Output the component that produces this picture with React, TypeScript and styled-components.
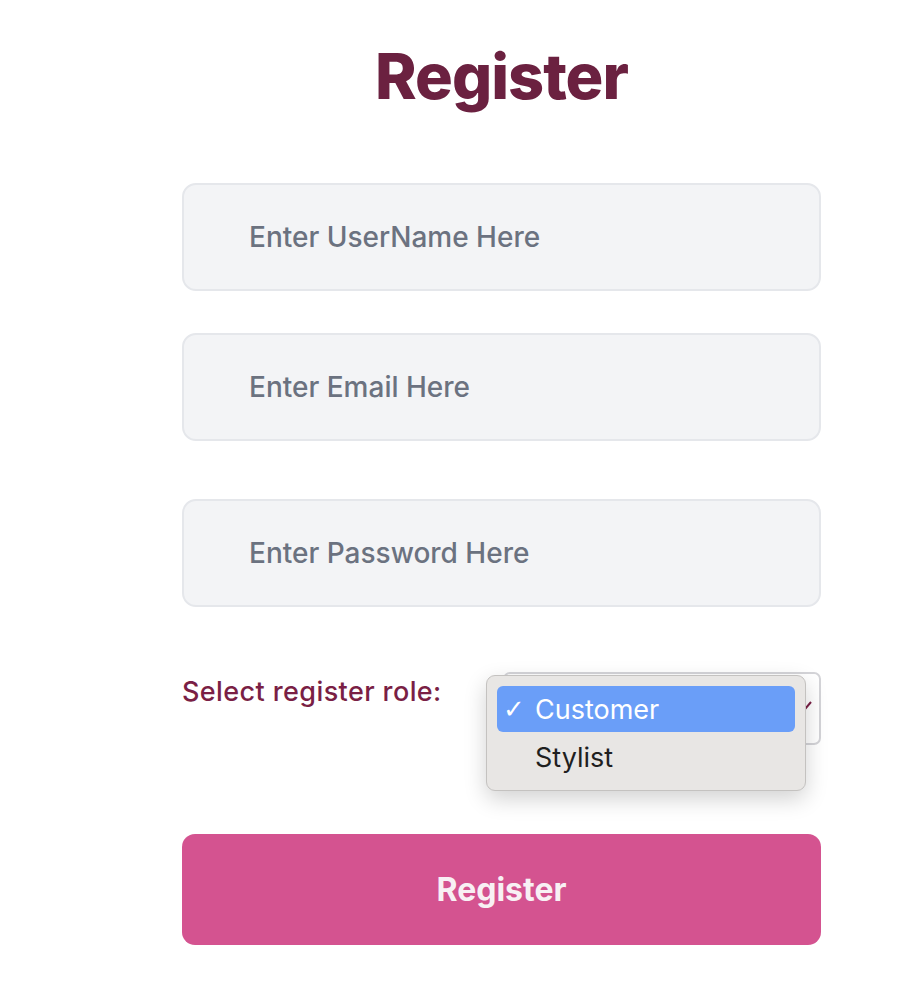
import React from 'react';
import styled, {createGlobalStyle} from "styled-components";

const GlobalStyle = createGlobalStyle`
  body {
    margin: 0;
    background: #ffffff;
    font-family: Inter, "Noto Sans", sans-serif;
  }
`

const Page = styled.div`
  width: 908px;
  height: 982px;
  padding-left: 182px;
  box-sizing: border-box;
`

const Form = styled.form`
  width: 639px;
  display: flex;
  flex-direction: column;
`

const Title = styled.h1`
  margin: 0;
  padding-top: 38px;
  height: 145px;
  box-sizing: border-box;
  text-align: center;
  font-size: 63px;
  font-weight: 800;
  letter-spacing: -1px;
  line-height: 76px;
  color: #6b2140;
`

type FieldProps = {
    gap: number
}

const Field = styled.input<FieldProps>`
  display: block;
  width: 100%;
  height: 108px;
  margin-top: ${({gap}) => gap}px;
  padding: 0 0 0 65px;
  box-sizing: border-box;
  background: #f3f4f6;
  border: 2px solid #e5e7eb;
  border-radius: 14px;
  font-family: Inter, sans-serif;
  font-size: 28px;
  font-weight: 500;
  color: #374151;
  outline: none;

  &::placeholder {
    color: #6b7280;
  }
`

const RoleRow = styled.div`
  position: relative;
  display: flex;
  justify-content: space-between;
  align-items: flex-start;
  margin-top: 65px;
  height: 73px;
`

const RoleLabel = styled.label`
  padding-top: 3px;
  font-size: 27px;
  font-weight: 500;
  letter-spacing: 0.4px;
  color: #7a1f45;
`

const RoleSelect = styled.div`
  width: 318px;
  height: 73px;
  box-sizing: border-box;
  border: 2px solid #d4d4d8;
  border-radius: 7px;
  background: #ffffff;
  position: relative;
`

const Chevron = styled.svg`
  position: absolute;
  right: 6px;
  top: 24px;
`

const Menu = styled.ul`
  position: absolute;
  left: 304px;
  top: 3px;
  width: 320px;
  margin: 0;
  padding: 10px 10px 8px;
  box-sizing: border-box;
  list-style: none;
  background: #e8e6e4;
  border: 1px solid #c4c2c0;
  border-radius: 9px;
  box-shadow: 0 8px 22px rgba(0, 0, 0, 0.18);
`

type OptionProps = {
    selected?: boolean
}

const Option = styled.li<OptionProps>`
  display: flex;
  align-items: center;
  height: 46px;
  padding-left: 6px;
  border-radius: 6px;
  background: ${({selected}) => selected ? '#6a9ef8' : 'transparent'};
  color: ${({selected}) => selected ? '#ffffff' : '#1f1f1f'};
  font-size: 27px;
  font-weight: 400;

  & + & {
    height: 50px;
  }
`

const Check = styled.span`
  width: 32px;
  font-family: "DejaVu Sans", sans-serif;
  font-size: 26px;
`

const SubmitButton = styled.button`
  margin-top: 89px;
  width: 100%;
  height: 111px;
  border: none;
  border-radius: 13px;
  background: #d45390;
  color: #f8f0f4;
  font-family: Inter, sans-serif;
  font-size: 32px;
  font-weight: 700;
`

export default function App() {
    return (
        <Page>
            <GlobalStyle/>
            <Form onSubmit={e => e.preventDefault()}>
                <Title>Register</Title>
                <Field gap={38} placeholder="Enter UserName Here"/>
                <Field gap={42} placeholder="Enter Email Here"/>
                <Field gap={58} type="password" placeholder="Enter Password Here"/>
                <RoleRow>
                    <RoleLabel>Select register role:</RoleLabel>
                    <RoleSelect>
                        <Chevron width="14" height="14" viewBox="0 0 14 14">
                            <path d="M2 4 L7 10 L12 4" fill="none" stroke="#7a1f45" strokeWidth="2"/>
                        </Chevron>
                    </RoleSelect>
                    <Menu>
                        <Option selected><Check>✓</Check>Customer</Option>
                        <Option><Check/>Stylist</Option>
                    </Menu>
                </RoleRow>
                <SubmitButton type="submit">Register</SubmitButton>
            </Form>
        </Page>
    );
}
